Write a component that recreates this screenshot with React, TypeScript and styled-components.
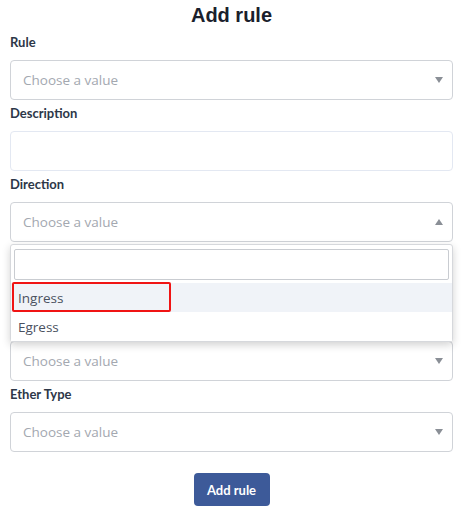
import styled, { createGlobalStyle } from 'styled-components';

const GlobalStyle = createGlobalStyle`
  html, body {
    margin: 0;
    padding: 0;
    background: #ffffff;
  }
  body {
    font-family: 'Open Sans', 'Noto Sans', sans-serif;
  }
`;

const Page = styled.div`
  padding: 0 8px 0 10px;
`;

const Title = styled.h2`
  margin: 1px 0 4px;
  font-family: 'Liberation Sans', Arial, sans-serif;
  font-size: 20px;
  line-height: 28px;
  font-weight: 700;
  text-align: center;
  color: #1a202c;
`;

const Label = styled.label`
  display: block;
  height: 18px;
  margin: 4px 0 9px;
  font-family: Lato, 'Open Sans', sans-serif;
  font-size: 13px;
  line-height: 18px;
  font-weight: 700;
  color: #2d3748;
`;

const Box = styled.div<{ $light?: boolean }>`
  box-sizing: border-box;
  height: 40px;
  display: flex;
  align-items: center;
  justify-content: space-between;
  padding: 0 9px 0 12px;
  border: 1px solid ${(p) => (p.$light ? '#e3e8f2' : '#d0d3d8')};
  border-radius: 4px;
  background: #fff;
`;

const Placeholder = styled.span`
  font-size: 13.5px;
  color: #a3a8b0;
`;

const Arrow = styled.span<{ $up?: boolean }>`
  width: 0;
  height: 0;
  border-left: 4px solid transparent;
  border-right: 4px solid transparent;
  ${(p) =>
    p.$up ? 'border-bottom: 6px solid #8a8f96;' : 'border-top: 6px solid #8a8f96;'}
`;

const Menu = styled.div`
  position: relative;
  z-index: 2;
  margin: 2px 0 -32px;
  border: 1px solid #d6d8dc;
  border-radius: 3px;
  background: #fff;
  box-shadow: 0 3px 8px rgba(0, 0, 0, 0.18);
`;

const Search = styled.div`
  box-sizing: border-box;
  height: 31px;
  margin: 4px 3px 3px;
  border: 1px solid #c9ccd1;
  border-radius: 2px;
`;

const Option = styled.div<{ $active?: boolean }>`
  position: relative;
  height: 29px;
  display: flex;
  align-items: center;
  padding-left: 7px;
  font-size: 13.5px;
  color: #4a5160;
  background: ${(p) => (p.$active ? '#f0f3f8' : '#fff')};
`;

const Highlight = styled.span`
  position: absolute;
  left: 1px;
  top: -1px;
  width: 159px;
  height: 30px;
  box-sizing: border-box;
  border: 2px solid #f01414;
  border-radius: 2px;
`;

const Actions = styled.div`
  display: flex;
  justify-content: center;
  margin-top: 21px;
`;

const Button = styled.button`
  width: 76px;
  height: 33px;
  border: none;
  border-radius: 4px;
  background: #3d5a99;
  color: #fff;
  font-family: Lato, 'Open Sans', sans-serif;
  font-size: 13px;
  font-weight: 700;
`;

const Select = ({ open }: { open?: boolean }) => (
  <Box>
    <Placeholder>Choose a value</Placeholder>
    <Arrow $up={open} />
  </Box>
);

export default function App() {
  return (
    <Page>
      <GlobalStyle />
      <Title>Add rule</Title>

      <Label>Rule</Label>
      <Select />

      <Label>Description</Label>
      <Box $light />

      <Label>Direction</Label>
      <Select open />
      <Menu>
        <Search />
        <Option $active>
          Ingress
          <Highlight />
        </Option>
        <Option>Egress</Option>
      </Menu>

      {/* label of this field sits under the open menu */}
      <Label />
      <Select />

      <Label>Ether Type</Label>
      <Select />

      <Actions>
        <Button>Add rule</Button>
      </Actions>
    </Page>
  );
}
